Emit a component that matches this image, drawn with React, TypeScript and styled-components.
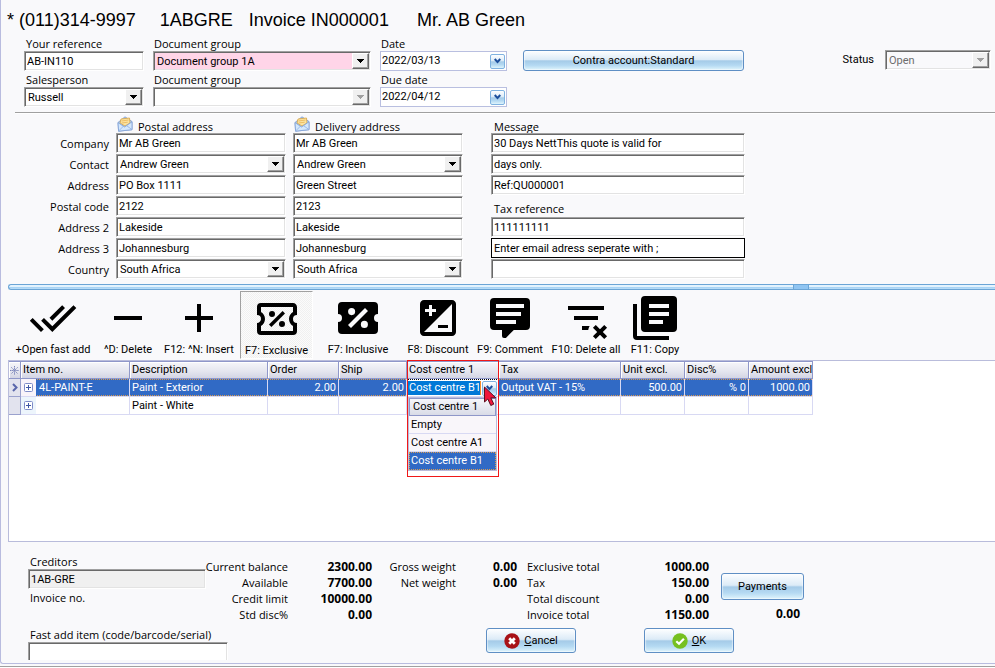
import React, { useId } from "react";
import styled, { createGlobalStyle, css } from "styled-components";

const ui = `"Open Sans", "Noto Sans", sans-serif`;
const field = `Roboto, "Liberation Sans", sans-serif`;

const GlobalStyle = createGlobalStyle`
  * { box-sizing: border-box; }
  body { margin: 0; background: #f9f9fb; color: #000; }
  button, input, select { font: 11px/16px ${field}; color: #000; }
`;

const Page = styled.div`
  display: flex;
  flex-direction: column;
  min-height: 100vh;
  overflow-x: hidden;
  font: 11px/16px ${field};
`;

const Frame = styled.main`
  flex: 1;
  display: flex;
  flex-direction: column;
  border-left: 1px solid #b9bcdf;
  border-bottom: 1px solid #b9bcdf;
  border-radius: 0 0 0 3px;
`;

const StatusEdge = styled.div`
  height: 4px;
  border-top: 2px solid #f9f9fb;
  border-bottom: 1px solid #fff;
  background: #a0a0a0;
`;

const Title = styled.h1`
  display: flex;
  margin: 0;
  padding: 8px 0 5px 6px;
  font: 18px/24px "Liberation Sans", Arial, sans-serif;
  white-space: pre;
`;

const TitlePart = styled.span<{ $before?: number }>`
  margin-left: ${(p) => p.$before ?? 0}px;
`;

const sunken = css`
  border: 1px solid;
  border-color: #a0a0a0 #fff #fff #a0a0a0;
  box-shadow: inset 1px 1px #696969, inset -1px -1px #e3e3e3;
`;

const TextInput = styled.input<{ $look?: "plain" | "active" | "locked" | "open" }>`
  ${sunken}
  width: 100%;
  height: 20px;
  padding: 0 2px;
  background: ${(p) => (p.$look === "locked" ? "#f0f0f0" : "#fff")};
  outline: none;
  ${(p) => p.$look === "active" && css`border-color: #000; box-shadow: none;`}
  ${(p) =>
    p.$look === "open" &&
    css`
      width: 200px;
      height: 18px;
      border-bottom: 0;
      box-shadow: inset 1px 1px #696969, inset -1px 0 #e3e3e3;
    `}
`;

const SelectBox = styled.span<{ $pink?: boolean; $grey?: boolean }>`
  ${sunken}
  display: grid;
  width: 100%;
  height: 20px;
  padding: 1px;
  background: ${(p) => (p.$pink ? "#ffd5e8" : p.$grey ? "#f9f9fb" : "#fff")};
`;

const NativeSelect = styled.select`
  grid-area: 1 / 1;
  appearance: none;
  min-width: 0;
  height: 16px;
  padding: 1px 18px 0 2px;
  border: 0;
  background: transparent;
  outline: none;
  &:disabled { color: #6d6d6d; opacity: 1; }
`;

const ArrowButton = styled.span`
  grid-area: 1 / 1;
  justify-self: end;
  display: grid;
  place-items: center;
  width: 17px;
  height: 16px;
  background: #f0f0f0;
  border: 1px solid;
  border-color: #fff #696969 #696969 #fff;
  box-shadow: inset -1px -1px #a0a0a0;
  pointer-events: none;
`;

function Combo({ id, value, pink, disabled, label }: { id?: string; value: string; pink?: boolean; disabled?: boolean; label?: string }) {
  return (
    <SelectBox $pink={pink} $grey={disabled && !!value}>
      <NativeSelect id={id} aria-label={label} disabled={disabled} defaultValue={value}>
        <option>{value}</option>
      </NativeSelect>
      <ArrowButton>
        <svg width="7" height="4" viewBox="0 0 7 4" shapeRendering="crispEdges">
          <path d="M0 0h7L3.5 4z" fill={disabled ? "#a0a0a0" : "#000"} />
        </svg>
      </ArrowButton>
    </SelectBox>
  );
}

const Label = styled.label<{ $inset?: number }>`
  display: block;
  padding-left: ${(p) => p.$inset ?? 1}px;
  font: 11px/14px ${ui};
  white-space: nowrap;
`;

const HeaderBar = styled.section`
  display: flex;
  align-items: flex-start;
  gap: 9px;
  padding: 0 4px 5px 23px;
`;

const Stack = styled.div<{ $width: number }>`
  display: flex;
  flex-direction: column;
  gap: 2px;
  flex: 0 0 ${(p) => p.$width}px;
  min-width: 0;
`;

const DateBox = styled.span`
  display: flex;
  align-items: center;
  height: 20px;
  padding-right: 1px;
  border: 1px solid #b9bfe0;
  background: #fff;
`;

const DateInput = styled.input`
  flex: 1;
  min-width: 0;
  height: 16px;
  padding: 0 1px;
  border: 0;
  background: transparent;
  outline: none;
`;

const glassy = css`
  border: 1px solid #5f8fc4;
  border-radius: 3px;
  background: linear-gradient(#fdfeff, #dcebf7 45%, #a5cbe8 52%, #b4d9f2 75%, #def4fc);
`;

const DropButton = styled.button`
  ${glassy}
  display: grid;
  place-items: center;
  flex: none;
  width: 15px;
  height: 15px;
  padding: 0;
  border-color: #7fb2e0;
  border-radius: 2px;
`;

const Chevron = () => (
  <svg width="7" height="6" viewBox="0 0 7 6" fill="none" stroke="#1d4f9c" strokeWidth="2">
    <path d="M.7 1 3.5 4 6.3 1" />
  </svg>
);

const GlassButton = styled.button<{ $width: number; $height: number }>`
  ${glassy}
  display: flex;
  align-items: center;
  justify-content: center;
  gap: 4px;
  width: ${(p) => p.$width}px;
  height: ${(p) => p.$height}px;
  padding: 0;
  box-shadow: inset 0 0 1px 1px #ffffff80;
`;

const ContraSlot = styled.div`
  margin: 13px auto 0 7px;
`;

const StatusField = styled.div`
  display: grid;
  grid-template-columns: auto 106px;
  align-items: center;
  gap: 11px;
  margin-top: 13px;
`;

function Field({ label, inset, children }: { label: string; inset?: number; children: (id: string) => React.ReactNode }) {
  const id = useId();
  return (
    <div>
      <Label htmlFor={id} $inset={inset}>{label}</Label>
      {children(id)}
    </div>
  );
}

const DateField = ({ label, value }: { label: string; value: string }) => (
  <Field label={label}>
    {(id) => (
      <DateBox>
        <DateInput id={id} defaultValue={value} />
        <DropButton aria-label={`Choose ${label.toLowerCase()}`}><Chevron /></DropButton>
      </DateBox>
    )}
  </Field>
);

const Rule = styled.hr`
  width: calc(100% - 14px);
  height: 2px;
  margin: 0 0 0 14px;
  border: 0;
  border-top: 1px solid #a0a0a0;
  background: #fff;
`;

const AddressGrid = styled.section`
  display: grid;
  grid-template-columns: 108px 170px 170px 275px;
  grid-template-rows: 19px;
  grid-auto-rows: 21px;
  column-gap: 7px;
  margin-bottom: 4px;
`;

const RowLabel = styled.label`
  align-self: center;
  text-align: right;
  font: 11px/16px ${ui};
`;

const ColumnHeading = styled.div`
  display: flex;
  align-items: flex-end;
  gap: 5px;
  padding-left: 1px;
  font: 11px/12px ${ui};
  svg { margin-bottom: 1px; }
`;

const MessageCell = styled.div`
  display: flex;
  align-items: flex-end;
  padding: 0 0 1px 21px;
`;

const MessageHeading = styled(ColumnHeading)`
  padding-left: 24px;
`;

const EnvelopeIcon = () => (
  <svg width="16" height="16" viewBox="0 0 16 16" aria-hidden="true">
    <path d="M1 6.5 8 .8l7 4.7v8.2L1.6 15.2z" fill="#a9cdf5" stroke="#7d9ad0" strokeWidth=".8" />
    <path d="M3 7 4 3l8.500-1L13 7 8 10z" fill="#fbe3a0" stroke="#d9a441" strokeWidth=".8" />
    <path d="m4.500 5 7-1M4.700 7l6-.8" stroke="#e8b455" strokeWidth=".8" />
    <path d="M1 6.600 7.600 11 15 5.800v7.900L1.600 15.200z" fill="#d3e7fc" stroke="#7f9fd6" strokeWidth=".8" />
    <path d="m1.600 15 5-5M15 13.600l-5.500-4" stroke="#8fb0e2" strokeWidth=".8" />
  </svg>
);

const Splitter = styled.div`
  display: flex;
  height: 6px;
  margin: 0 0 1px 7px;
  border: 1px solid #6ba5d6;
  border-right: 0;
  border-radius: 3px 0 0 3px;
  background: linear-gradient(#e3f3fe 0 40%, #a9d4f5 60% 80%, #c9e6fa);
`;

const SplitterGrip = styled.div`
  width: 16px;
  margin-left: 79.5%;
  border: solid #6ba5d6;
  border-width: 0 1px;
  background: #90c5f2;
`;

const Toolbar = styled.nav`
  display: flex;
  height: 69px;
  padding: 0 0 1px 9px;
`;

const ToolButton = styled.button<{ $width: number; $pressed?: boolean }>`
  display: flex;
  flex-direction: column;
  align-items: center;
  width: ${(p) => p.$width}px;
  padding: 3px 0 0;
  border: 0;
  background: none;
  line-height: 14px;
  white-space: nowrap;
  svg { flex: none; margin-bottom: 1px; }
  ${(p) =>
    p.$pressed &&
    css`
      margin-left: 2px;
      border: 1px solid;
      border-color: #a0a0a0 #fff #fff #a0a0a0;
      background: repeating-conic-gradient(#f0f0f0 0 25%, #fbfbfb 0 50%) 0 0 / 2px 2px;
    `}
`;

const tools: { label: string; width: number; pressed?: boolean; path: string }[] = [
  { label: "+Open fast add", width: 86, path: "M18 7l-1.410-1.410-6.340 6.340 1.410 1.410L18 7zm4.240-1.410L11.660 16.170 7.480 12l-1.410 1.410L11.660 19l12-12-1.420-1.410zM.410 13.410L6 19l1.410-1.410L1.830 12 .410 13.410z" },
  { label: "^D: Delete", width: 64, path: "M5 11h14v2H5z" },
  { label: "F12: ^N: Insert", width: 78, path: "M19 13h-6v6h-2v-6H5v-2h6V5h2v6h6z" },
  { label: "F7: Exclusive", width: 73, pressed: true, path: "M14.800 8 16 9.200 9.200 16 8 14.800 14.800 8M4 4H20C21.110 4 22 4.890 22 6V10A2 2 0 0 0 20 12 2 2 0 0 0 22 14V18A2 2 0 0 1 20 20H4A2 2 0 0 1 2 18V14C3.110 14 4 13.100 4 12A2 2 0 0 0 2 10V6A2 2 0 0 1 4 4M4 6V8.540C5.240 9.260 6 10.570 6 12 6 13.430 5.240 14.750 4 15.460V18H20V15.460C18.760 14.750 18 13.430 18 12 18 10.570 18.760 9.250 20 8.540V6H4M9.500 8A1.500 1.500 0 0 1 9.500 11 1.500 1.500 0 0 1 9.500 8M14.500 13A1.500 1.500 0 0 1 14.500 16 1.500 1.500 0 0 1 14.500 13Z" },
  { label: "F7: Inclusive", width: 90, path: "M4 4A2 2 0 0 0 2 6V10A2 2 0 0 1 4 12 2 2 0 0 1 2 14V18A2 2 0 0 0 4 20H20A2 2 0 0 0 22 18V14A2 2 0 0 1 20 12 2 2 0 0 1 22 10V6A2 2 0 0 0 20 4H4M15.500 7 17 8.500 8.500 17 7 15.500 15.500 7M8.810 7.040A1.770 1.770 0 0 1 8.810 10.580 1.770 1.770 0 0 1 8.810 7.040M15.190 13.420A1.770 1.770 0 0 1 15.190 16.960 1.770 1.770 0 0 1 15.190 13.420Z" },
  { label: "F8: Discount", width: 70, path: "M19 3H5c-1.100 0-2 .9-2 2v14c0 1.100.9 2 2 2h14c1.100 0 2-.9 2-2V5c0-1.100-.9-2-2-2zM5.500 7.500h2v-2H9v2h2V9H9v2H7.500V9h-2V7.500zM19 19H5L19 5v14zm-2-2v-1.500h-5V17h5z" },
  { label: "F9: Comment", width: 74, path: "M9 22A1 1 0 0 1 8 21V18H4A2 2 0 0 1 2 16V4A2 2 0 0 1 4 2H20A2 2 0 0 1 22 4V16A2 2 0 0 1 20 18H13.900L10.200 21.710C10 21.900 9.750 22 9.500 22H9M5 5V7H19V5H5M5 9V11H17.500V9H5M5 13V15H15V13H5Z" },
  { label: "F10: Delete all", width: 78, path: "M21 8H3V6H21V8M13.810 16H10V18H13.090C13.210 17.280 13.460 16.610 13.810 16M18 11H6V13H18V11M21.120 15.460 19 17.590 16.880 15.460 15.470 16.880 17.590 19 15.470 21.120 16.880 22.540 19 20.410 21.120 22.540 22.540 21.120 20.410 19 22.540 16.880Z" },
  { label: "F11: Copy", width: 60, path: "M7 1H21A2 2 0 0 1 23 3V17A2 2 0 0 1 21 19H7A2 2 0 0 1 5 17V3A2 2 0 0 1 7 1M9 5V7H19V5H9M9 9V11H19V9H9M9 13V15H16V13H9M3 5V21H19V23H3A2 2 0 0 1 1 21V5H3Z" },
];

const GridPanel = styled.section`
  flex: 1;
  margin-left: 7px;
  border: 1px solid #b9bcdb;
  border-right: 0;
  background: #fff;
`;

const Table = styled.table`
  width: 804px;
  table-layout: fixed;
  border-collapse: separate;
  border-spacing: 0;
`;

const HeadCell = styled.th`
  position: relative;
  height: 18px;
  padding: 0 0 0 2px;
  border: solid #8f97c9;
  border-width: 1px 1px 1px 0;
  background: linear-gradient(#f6f6fa, #e4e5ee 60%, #d3d5e4);
  box-shadow: inset 1px 1px #fff;
  font-weight: 400;
  text-align: left;
  line-height: 16px;
  white-space: nowrap;
`;

const MarkerHead = styled(HeadCell)`
  padding: 0;
  line-height: 0;
  text-align: center;
`;

const Cell = styled.td<{ $active?: boolean; $right?: boolean }>`
  height: 18px;
  padding: 0 2px;
  border: solid #d8d9f3;
  border-width: 0 1px 1px 0;
  line-height: 16px;
  white-space: nowrap;
  text-align: ${(p) => (p.$right ? "right" : "left")};
  ${(p) =>
    p.$active &&
    css`
      color: #fff;
      background:
        repeating-linear-gradient(90deg, #d99b52 0 1px, transparent 1px 2px) top / 100% 1px no-repeat,
        repeating-linear-gradient(90deg, #d99b52 0 1px, transparent 1px 2px) bottom / 100% 1px no-repeat,
        #316ac5;
    `}
`;

const Indicator = styled.td`
  padding: 0;
  border: solid #9aa1cd;
  border-width: 0 1px 1px 0;
  background: #e2e3ee;
  text-align: center;
  line-height: 0;
`;

const ItemCell = styled(Cell)`
  padding: 0;
`;

const ItemLayout = styled.div<{ $tint: string }>`
  display: flex;
  align-items: center;
  height: 17px;
  gap: 3px;
  > button { background: ${(p) => p.$tint}; }
`;

const ExpandButton = styled.button`
  display: grid;
  place-items: center;
  width: 15px;
  height: 17px;
  padding: 0;
  border: 0;
`;

const Expand = () => (
  <ExpandButton aria-label="Expand row">
    <svg width="9" height="9" viewBox="0 0 9 9">
      <rect x=".5" y=".5" width="8" height="8" rx="1" fill="#fff" stroke="#7f8cc8" />
      <path d="M2 4.500h5M4.500 2v5" stroke="#3f56a5" />
    </svg>
  </ExpandButton>
);

const EditorCell = styled(Cell)`
  position: relative;
  padding: 0;
  border-top: 1px dotted #000;
  background: #fff;
`;

const Editor = styled.div`
  display: flex;
  align-items: center;
  gap: 1px;
  height: 16px;
  padding: 0 1px;
`;

const EditorInput = styled.input`
  flex: 1;
  min-width: 0;
  height: 14px;
  padding: 0 1px;
  border: 0;
  border-right: 1px solid #f08b2c;
  background: #0078d7;
  color: #fff;
  outline: none;
`;

const Highlight = styled.span`
  position: absolute;
  z-index: 3;
  top: -2px;
  left: 0;
  width: 92px;
  height: 117px;
  border: 1px solid #f01818;
  pointer-events: none;
`;

const Popup = styled.div`
  position: absolute;
  z-index: 2;
  top: 17px;
  left: 1px;
  width: 89px;
  border: 1px solid #b9bcdb;
  background: #f9f6fa;
`;

const PopupHead = styled.div`
  height: 18px;
  padding-left: 3px;
  border: 1px solid #8f97c9;
  background: linear-gradient(#f6f6fa, #d9dbe7);
  line-height: 16px;
`;

const Options = styled.ul`
  margin: 0;
  padding: 0;
  list-style: none;
`;

const Option = styled.li<{ $chosen?: boolean }>`
  height: 18px;
  padding-left: 2px;
  border-bottom: 1px solid #d8d9f3;
  line-height: 17px;
  ${(p) =>
    p.$chosen &&
    css`
      color: #fff;
      background: #316ac5;
      border: 1px dotted #d99b52;
      padding-left: 1px;
      line-height: 16px;
    `}
`;

const Pointer = styled.svg`
  position: absolute;
  z-index: 4;
  top: 5px;
  left: 76px;
  pointer-events: none;
`;

const Footer = styled.section`
  display: flex;
  padding: 13px 0 3px 27px;
`;

const Creditor = styled.div`
  flex: 0 0 178px;
  min-width: 0;
`;

const InvoiceNo = styled.div`
  padding: 2px 0 23px 2px;
  font: 11px/14px ${ui};
`;

const Totals = styled.div`
  display: flex;
  flex: 1;
  flex-direction: column;
  justify-content: space-between;
  padding: 4px 0 7px;
`;

const Groups = styled.div`
  display: flex;
`;

const Group = styled.dl<{ $label: number; $value: number; $left?: boolean; $before?: number }>`
  display: grid;
  grid-template-columns: ${(p) => p.$label}px ${(p) => p.$value}px;
  grid-auto-rows: 16px;
  align-content: start;
  margin: 0 0 0 ${(p) => p.$before ?? 0}px;
  font: 11px/16px ${ui};
  white-space: nowrap;
  dt {
    justify-self: ${(p) => (p.$left ? "start" : "end")};
  }
  dd {
    margin: 0;
    font-size: 12px;
    font-weight: 700;
    text-align: right;
  }
`;

const PaymentsBlock = styled.div`
  display: flex;
  flex-direction: column;
  gap: 6px;
  padding-top: 14px;
  margin-left: 12px;
  width: 83px;
`;

const Paid = styled.output`
  padding-right: 4px;
  font: bold 12px/16px ${ui};
  text-align: right;
`;

const Actions = styled.div`
  display: flex;
  gap: 68px;
  padding-left: 280px;
`;

const groups = [
  { label: 82, value: 84, rows: [["Current balance", "2300.00"], ["Available", "7700.00"], ["Credit limit", "10000.00"], ["Std disc%", "0.00"]] },
  { label: 84, value: 61, rows: [["Gross weight", "0.00"], ["Net weight", "0.00"]] },
  { label: 90, value: 92, before: 10, left: true, rows: [["Exclusive total", "1000.00"], ["Tax", "150.00"], ["Total discount", "0.00"], ["Invoice total", "1150.00"]] },
];

const addressRows = [
  { label: "Company", postal: "Mr AB Green", delivery: "Mr AB Green" },
  { label: "Contact", postal: "Andrew Green", delivery: "Andrew Green", combo: true },
  { label: "Address", postal: "PO Box 1111", delivery: "Green Street" },
  { label: "Postal code", postal: "2122", delivery: "2123" },
  { label: "Address 2", postal: "Lakeside", delivery: "Lakeside" },
  { label: "Address 3", postal: "Johannesburg", delivery: "Johannesburg" },
  { label: "Country", postal: "South Africa", delivery: "South Africa", combo: true },
];

const side = [
  { text: "30 Days NettThis quote is valid for", name: "Message line 1" },
  { text: "days only.", name: "Message line 2" },
  { text: "Ref:QU000001", name: "Message line 3" },
  null,
  { text: "111111111", name: "Tax reference", id: "tax-reference" },
  { text: "Enter email adress seperate with ;", name: "Email", active: true },
  { text: "", name: "Additional email" },
];

const widths = [12, 109, 138, 71, 68, 92, 122, 64, 64, 64];

const AsteriskIcon = () => (
  <svg width="9" height="9" viewBox="0 0 9 9" stroke="#7c86bb" aria-hidden="true">
    <path d="M4.500 0v9M0 4.500h9M1.300 1.300l6.400 6.400M7.700 1.300 1.300 7.700" strokeDasharray="1.500 .6" />
  </svg>
);

export default function App() {
  return (
    <Page>
      <GlobalStyle />
      <Frame>
        <Title>
          <TitlePart>* (011)314-9997</TitlePart>
          <TitlePart $before={24}>1ABGRE</TitlePart>
          <TitlePart $before={16}>Invoice IN000001</TitlePart>
          <TitlePart $before={28}>Mr. AB Green</TitlePart>
        </Title>

        <HeaderBar>
          <Stack $width={120}>
            <Field label="Your reference" inset={2}>{(id) => <TextInput id={id} defaultValue="AB-IN110" />}</Field>
            <Field label="Salesperson" inset={2}>{(id) => <Combo id={id} value="Russell" />}</Field>
          </Stack>
          <Stack $width={218}>
            <Field label="Document group">{(id) => <Combo id={id} value="Document group 1A" pink />}</Field>
            <Field label="Document group">{(id) => <Combo id={id} value="" disabled />}</Field>
          </Stack>
          <Stack $width={127}>
            <DateField label="Date" value="2022/03/13" />
            <DateField label="Due date" value="2022/04/12" />
          </Stack>
          <ContraSlot>
            <GlassButton $width={221} $height={21}>Contra account:Standard</GlassButton>
          </ContraSlot>
          <StatusField>
            <label htmlFor="status">Status</label>
            <Combo id="status" value="Open" disabled />
          </StatusField>
        </HeaderBar>
        <Rule />

        <AddressGrid>
          <span />
          <ColumnHeading><EnvelopeIcon />Postal address</ColumnHeading>
          <ColumnHeading><EnvelopeIcon />Delivery address</ColumnHeading>
          <MessageHeading>Message</MessageHeading>
          {addressRows.map((r, i) => {
            const s = side[i];
            const id = `postal-${i}`;
            return (
              <React.Fragment key={r.label}>
                <RowLabel htmlFor={id}>{r.label}</RowLabel>
                {r.combo ? <Combo id={id} value={r.postal} /> : <TextInput id={id} defaultValue={r.postal} />}
                {r.combo ? (
                  <Combo label={`Delivery ${r.label}`} value={r.delivery} />
                ) : (
                  <TextInput aria-label={`Delivery ${r.label}`} defaultValue={r.delivery} />
                )}
                <MessageCell>
                  {s ? (
                    <TextInput id={s.id} aria-label={s.name} defaultValue={s.text} $look={s.active ? "active" : "plain"} />
                  ) : (
                    <Label htmlFor="tax-reference" $inset={3}>Tax reference</Label>
                  )}
                </MessageCell>
              </React.Fragment>
            );
          })}
        </AddressGrid>

        <Splitter><SplitterGrip /></Splitter>

        <Toolbar>
          {tools.map((t) => (
            <ToolButton key={t.label} $width={t.width} $pressed={t.pressed} aria-pressed={t.pressed}>
              <svg width="48" height="48" viewBox="0 0 24 24" aria-hidden="true"><path d={t.path} fillRule="evenodd" /></svg>
              {t.label}
            </ToolButton>
          ))}
        </Toolbar>

        <GridPanel>
          <Table>
            <colgroup>{widths.map((w, i) => <col key={i} width={w} />)}</colgroup>
            <thead>
              <tr>
                <MarkerHead aria-label="Row marker"><AsteriskIcon /></MarkerHead>
                <HeadCell>Item no.</HeadCell>
                <HeadCell>Description</HeadCell>
                <HeadCell>Order</HeadCell>
                <HeadCell>Ship</HeadCell>
                <HeadCell>Cost centre 1<Highlight /></HeadCell>
                <HeadCell>Tax</HeadCell>
                <HeadCell>Unit excl.</HeadCell>
                <HeadCell>Disc%</HeadCell>
                <HeadCell>Amount excl</HeadCell>
              </tr>
            </thead>
            <tbody>
              <tr>
                <Indicator>
                  <svg width="6" height="9" viewBox="0 0 6 9" fill="none" stroke="#5a67ab" strokeWidth="2"><path d="m1 1 3.500 3.500L1 8" /></svg>
                </Indicator>
                <ItemCell $active><ItemLayout $tint="#f9f4fa"><Expand />4L-PAINT-E</ItemLayout></ItemCell>
                <Cell $active>Paint - Exterior</Cell>
                <Cell $active $right>2.00</Cell>
                <Cell $active $right>2.00</Cell>
                <EditorCell>
                  <Editor>
                    <EditorInput aria-label="Cost centre" defaultValue="Cost centre B1" />
                    <DropButton aria-label="Show cost centres"><Chevron /></DropButton>
                  </Editor>
                  <Popup>
                    <PopupHead>Cost centre 1</PopupHead>
                    <Options role="listbox" aria-label="Cost centres">
                      <Option role="option">Empty</Option>
                      <Option role="option">Cost centre A1</Option>
                      <Option role="option" aria-selected $chosen>Cost centre B1</Option>
                    </Options>
                  </Popup>
                  <Pointer width="15" height="22" viewBox="0 0 15 22" aria-hidden="true">
                    <path d="M1.500 2v15l3.300-3 3 6.500 3-1.400-3-6.300h5z" fill="#f0143c" stroke="#5a1020" />
                  </Pointer>
                </EditorCell>
                <Cell $active>Output VAT - 15%</Cell>
                <Cell $active $right>500.00</Cell>
                <Cell $active $right>% 0</Cell>
                <Cell $active $right>1000.00</Cell>
              </tr>
              <tr>
                <Indicator />
                <ItemCell><ItemLayout $tint="#edf5fc"><Expand /></ItemLayout></ItemCell>
                <Cell>Paint - White</Cell>
                <Cell /><Cell /><Cell /><Cell /><Cell /><Cell /><Cell />
              </tr>
            </tbody>
          </Table>
        </GridPanel>

        <Footer>
          <Creditor>
            <Field label="Creditors" inset={2}>{(id) => <TextInput id={id} readOnly $look="locked" defaultValue="1AB-GRE" />}</Field>
            <InvoiceNo>Invoice no.</InvoiceNo>
            <Field label="Fast add item (code/barcode/serial)" inset={2}>{(id) => <TextInput id={id} $look="open" />}</Field>
          </Creditor>
          <Totals>
            <Groups>
              {groups.map((g, i) => (
                <Group key={i} $label={g.label} $value={g.value} $left={g.left} $before={g.before}>
                  {g.rows.map(([name, amount]) => (
                    <React.Fragment key={name}><dt>{name}</dt><dd>{amount}</dd></React.Fragment>
                  ))}
                </Group>
              ))}
              <PaymentsBlock>
                <GlassButton $width={83} $height={27}>Payments</GlassButton>
                <Paid>0.00</Paid>
              </PaymentsBlock>
            </Groups>
            <Actions>
              <GlassButton $width={90} $height={25}>
                <svg width="16" height="16" viewBox="0 0 16 16" aria-hidden="true">
                  <circle cx="8" cy="8" r="7.700" fill="#a81217" />
                  <path d="m5.200 5.200 5.600 5.600M10.800 5.200l-5.600 5.600" stroke="#fff" strokeWidth="2.800" />
                </svg>
                <span><u>C</u>ancel</span>
              </GlassButton>
              <GlassButton $width={90} $height={25}>
                <svg width="16" height="16" viewBox="0 0 16 16" aria-hidden="true">
                  <circle cx="8" cy="8" r="7.700" fill="#76c021" />
                  <path d="m4.300 8.200 2.700 2.600 4.900-5" fill="none" stroke="#fff" strokeWidth="2.200" />
                </svg>
                <span><u>O</u>K</span>
              </GlassButton>
            </Actions>
          </Totals>
        </Footer>
      </Frame>
      <StatusEdge />
    </Page>
  );
}
